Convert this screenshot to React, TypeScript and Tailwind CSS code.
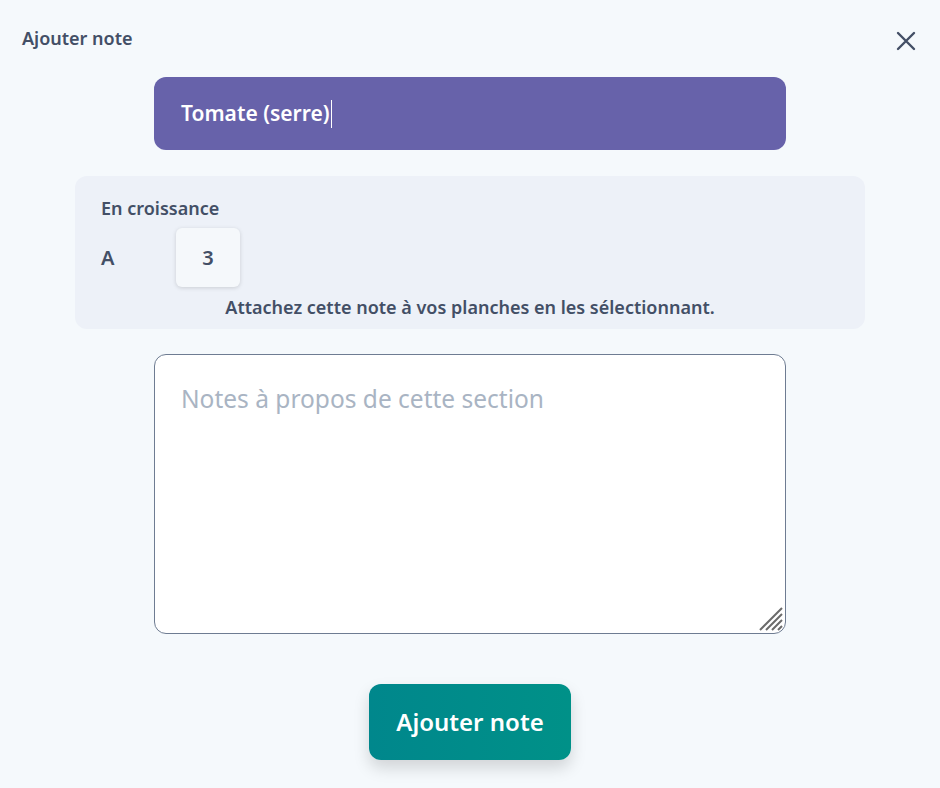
import React from "react";

export default function App() {
  const font = { fontFamily: "'Noto Sans', Lato, sans-serif" };
  return (
    <div className="w-[940px] h-[788px] bg-[#f5f9fc] text-[#434f66] flex flex-col" style={font}>
      <div className="flex items-center justify-between pl-[22px] pr-[23px] pt-[23px] h-[52px]">
        <span className="text-[18px] font-semibold leading-[24px]">Ajouter note</span>
        <svg width="22" height="22" viewBox="0 0 22 22" className="text-[#434f66] mt-[6px]">
          <path d="M3 3 L19 19 M19 3 L3 19" stroke="currentColor" strokeWidth="2.4" strokeLinecap="round" />
        </svg>
      </div>
      <div className="mt-[25px] flex justify-center">
        <div className="w-[632px] h-[73px] rounded-[12px] bg-[#6762aa] flex items-center pl-[27px]">
          <span className="text-white text-[21px] font-semibold">Tomate (serre)</span>
          <span className="w-px h-[28px] bg-white ml-[1px]" />
        </div>
      </div>
      <div className="mt-[26px] mx-[75px] h-[153px] rounded-[12px] bg-[#edf1f8] pl-[26px] pt-[20px] flex flex-col">
        <span className="text-[18px] font-semibold leading-[24px]">En croissance</span>
        <div className="flex items-center mt-[8px]">
          <span className="w-[75px] text-[20px] font-semibold">A</span>
          <div className="w-[64px] h-[59px] rounded-[6px] bg-[#f5f8fb] shadow-[0_1px_4px_rgba(0,0,0,0.15)] flex items-center justify-center text-[20px] font-semibold">3</div>
        </div>
        <div className="mt-[8px] text-center pr-[26px] text-[18px] font-semibold leading-[24px]">
          Attachez cette note à vos planches en les sélectionnant.
        </div>
      </div>
      <div className="mt-[25px] flex justify-center">
        <div className="relative">
          <textarea
            className="block w-[632px] h-[280px] rounded-[12px] border border-[#6e7c92] bg-white px-[26px] pt-[26px] text-[24.5px] placeholder-[#a9b4c3] outline-none resize-none"
            placeholder="Notes à propos de cette section"
            style={font}
          />
          <svg width="26" height="26" viewBox="0 0 26 26" className="absolute right-[2px] bottom-[2px]">
            <path d="M2 24 L24 2 M8 24 L24 8 M14 24 L24 14 M20 24 L24 20" stroke="#6b6b6b" strokeWidth="2" />
          </svg>
        </div>
      </div>
      <div className="mt-[50px] flex justify-center">
        <button className="w-[202px] h-[76px] rounded-[12px] bg-gradient-to-r from-[#00878c] to-[#009188] text-white text-[24px] font-semibold shadow-[0_8px_16px_rgba(0,0,0,0.15)]" style={font}>
          Ajouter note
        </button>
      </div>
    </div>
  );
}
